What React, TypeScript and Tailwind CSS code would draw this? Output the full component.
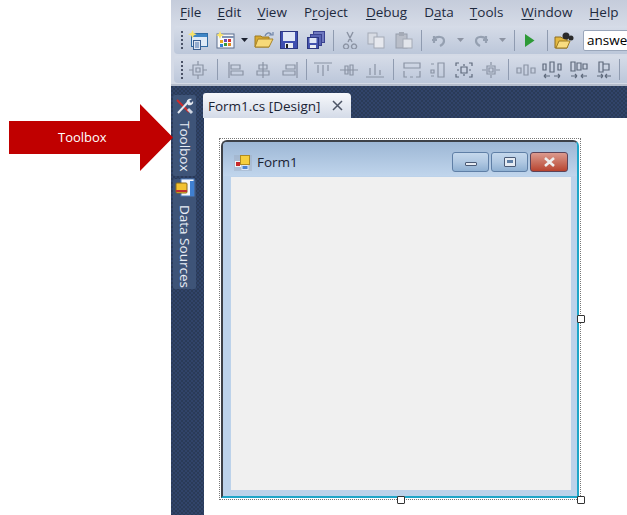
import React from "react";

const Grip = () => (
  <div className="flex flex-col gap-[2px] w-[3px] ml-[7px]">
    {[0, 1, 2, 3, 4].map((i) => (
      <div key={i} className="w-[2px] h-[2px] bg-[#4a5266]" />
    ))}
  </div>
);

const Sep = () => <div className="w-px h-[21px] bg-[#8f9bb0] shrink-0" />;

const Drop = ({ dark }: { dark?: boolean }) => (
  <svg width="7" height="4" viewBox="0 0 7 4" className="shrink-0"><path d="M0 0h7L3.5 4z" fill={dark ? "#1c2230" : "#8d94a3"} /></svg>
);

const Slot = ({ w, children }: { w: number; children: React.ReactNode }) => (
  <div className="flex items-center justify-center shrink-0" style={{ width: w }}>{children}</div>
);

const Mono = ({ d, w = 20 }: { d: string; w?: number }) => (
  <svg width={w} height="18" viewBox="0 0 20 18" fill="none" stroke="#8b93a3" strokeWidth="1.4"><path d={d} /></svg>
);

const NewProject = () => (
  <svg width="20" height="20" viewBox="0 0 20 20">
    <rect x="3.500" y="3.500" width="16" height="13" fill="#dfeaf6" stroke="#2f6aa3" />
    <rect x="4" y="4" width="15" height="3" fill="#3f86c6" />
    <rect x="5.500" y="10.500" width="7" height="9" fill="#dfe6f2" stroke="#3a5f92" />
    <path d="M7 13h4M7 15h4M7 17h4" stroke="#4a75ad" />
    <path d="M4.500 0l1.200 3 3 1.200-3 1.300-1.200 3-1.300-3L0 4.200l3.200-1.200z" fill="#f9e36a" />
  </svg>
);
const AddItem = () => (
  <svg width="19" height="18" viewBox="0 0 19 18">
    <rect x="1" y="3" width="17" height="14" fill="#f7f8fb" stroke="#5d6f8e" />
    <rect x="6" y="5" width="12" height="2" fill="#7f93b3" />
    <rect x="4" y="9" width="3" height="3" fill="#e8a820" />
    <rect x="8" y="8" width="3" height="3" fill="#6a4bb8" />
    <rect x="12" y="8" width="3" height="3" fill="#d8322a" />
    <rect x="4" y="13" width="3" height="3" fill="#2f7fd0" />
    <rect x="8" y="12" width="3" height="3" fill="#3a9a3a" />
    <rect x="12" y="12" width="3" height="3" fill="#e0861c" />
    <path d="M4 0l1.200 2.800L8 4 5.200 5.200 4 8 2.800 5.200 0 4l2.800-1.200z" fill="#f9e36a" />
  </svg>
);
const Open = () => (
  <svg width="20" height="18" viewBox="0 0 20 18">
    <path d="M1 5h6l1 1h7v10H1z" fill="#d8a92e" stroke="#9c7a22" />
    <path d="M4 8h15l-4 8H1z" fill="#f7d978" stroke="#a8842a" />
    <path d="M11 5c1-3 4-4 6-2l-1 1h3v-3" fill="none" stroke="#6f85a8" strokeWidth="1.200" />
  </svg>
);
const Save = () => (
  <svg width="18" height="18" viewBox="0 0 18 18">
    <rect x="0.500" y="0.500" width="17" height="17" fill="#3f4fb0" stroke="#2c3680" />
    <rect x="3" y="1" width="12" height="9" fill="#dfe6f6" />
    <rect x="5" y="12" width="8" height="5" fill="#e9ecf3" />
    <rect x="6" y="13" width="2" height="4" fill="#222" />
  </svg>
);
const SaveAll = () => (
  <svg width="18" height="18" viewBox="0 0 18 18">
    <rect x="6.500" y="0.500" width="11" height="11" fill="#6f79c0" stroke="#3a4290" />
    <rect x="3.500" y="3.500" width="11" height="11" fill="#5864b4" stroke="#3a4290" />
    <rect x="0.500" y="6.500" width="11" height="11" fill="#4453ae" stroke="#2c3680" />
    <rect x="2.500" y="7" width="7" height="5" fill="#dfe6f6" />
    <rect x="3" y="14" width="6" height="3" fill="#e9ecf3" />
  </svg>
);
const Cut = () => <Mono d="M7 1l5 10M13 1L8 11M6 13a2.500 2.500 0 1 0 .1 0M14 13a2.500 2.500 0 1 0 .1 0" />;
const Copy = () => (
  <svg width="18" height="17" viewBox="0 0 18 17">
    <rect x="1" y="1" width="9" height="11" fill="#d8dce4" stroke="#a4aab6" />
    <rect x="7" y="5" width="10" height="11" fill="#e6e8ee" stroke="#a4aab6" />
  </svg>
);
const Paste = () => (
  <svg width="18" height="18" viewBox="0 0 18 18">
    <rect x="1" y="3" width="11" height="14" fill="#b9bec9" stroke="#969dab" />
    <rect x="4" y="1" width="5" height="4" fill="#a4aab6" />
    <rect x="8" y="8" width="9" height="9" fill="#e2e5eb" stroke="#a4aab6" />
  </svg>
);
const Undo = () => <svg width="16" height="15" viewBox="0 0 16 15" fill="none"><path d="M3 10V3M1 7h5M3 6c3-3 10-3 10 2 0 2-2 4-4 5" stroke="#95a0b1" strokeWidth="2.200" /></svg>;
const Redo = () => <svg width="16" height="15" viewBox="0 0 16 15" fill="none"><path d="M13 10V3M15 7h-5M13 6C10 3 3 3 3 8c0 2 2 4 4 5" stroke="#95a0b1" strokeWidth="2.200" /></svg>;
const Play = () => <svg width="10" height="13" viewBox="0 0 10 13"><path d="M0 0l9.500 6.500L0 13z" fill="#2d9a37" /></svg>;
const Find = () => (
  <svg width="20" height="19" viewBox="0 0 20 19">
    <path d="M1 6h6l1 1h5v10H1z" fill="#e4b83f" stroke="#8c6d20" />
    <path d="M2 17l3-7h11l-3 7z" fill="#f8dc80" stroke="#9c7a22" />
    <circle cx="12" cy="5" r="3.500" fill="#2b2b2b" />
    <circle cx="17" cy="7" r="2.500" fill="#2b2b2b" />
  </svg>
);

const Layout = ({ n }: { n: number }) => {
  const paths: Record<number, string> = {
    0: "M5 4h10v10H5zM8 7h4v4H8zM10 0v4M10 14v4M1 9h4M15 9h4",
    1: "M3 1v16M5 4h9v4H5zM5 10h12v4H5z",
    2: "M10 1v16M6 4h8v4H6zM4 10h12v4H4z",
    3: "M17 1v16M6 4h9v4H6zM3 10h12v4H3z",
    4: "M1 2h18M5 4v8M10 4v11M15 4v6",
    5: "M1 9h18M6 5h3v8H6zM11 4h3v10h-3z",
    6: "M1 16h18M5 7v7M10 3v11M15 9v5",
    7: "M2 2h16v5H2zM2 10v6h3M8 16h3M14 16h4v-6",
    8: "M3 3h3M3 9h3v3H3zM3 15h3M10 2h6v14h-6z",
    9: "M2 5V2h3M15 2h3v3M18 13v3h-3M5 16H2v-3M7 6h6v6H7zM10 3v2M10 13v2M3 9h2M15 9h2",
    10: "M6 5h8v8H6zM8 7h4v4H8zM10 1v3M10 14v3M1 9h4M15 9h4",
    11: "M1 7h4v5H1zM8 4h4v10H8zM15 7h4v5h-4z",
    12: "M1 3h3v6H1zM8 1h4v10H8zM16 3h3v6h-3zM2 15h6M2 15l2-2M2 15l2 2M18 15h-6M18 15l-2-2M18 15l-2 2",
    13: "M2 1h4v9H2zM8 2h4v7H8zM14 3h4v5h-4zM2 15h6M8 15l-2-2M8 15l-2 2M18 15h-6M12 15l2-2M12 15l2 2",
    14: "M5 1h4v10H5zM9 3h6v6H9zM3 15h6M9 15l-2-2M9 15l-2 2M17 15h-6M11 15l2-2M11 15l2 2",
  };
  const strong = n >= 12 || n === 9;
  return (
    <svg width="20" height="18" viewBox="0 0 20 18" fill="none" stroke={strong ? "#5f6a7c" : "#8a93a4"} strokeWidth="1.200">
      <path d={paths[n]} />
    </svg>
  );
};

const M = ({ a, u, b, cls }: { a?: string; u: string; b?: string; cls: string }) => (
  <span className={cls}>
    {a}
    <span className="underline underline-offset-2 decoration-1">{u}</span>
    {b}
  </span>
);

const Caption = ({ k }: { k: "min" | "max" | "close" }) => {
  if (k === "close")
    return (
      <div className="w-[38px] h-[20px] rounded-[3px] border border-[#5c4358] bg-gradient-to-b from-[#dc9a8e] via-[#c9705f] to-[#b8432f] flex items-center justify-center">
        <svg width="13" height="10" viewBox="0 0 13 10"><path d="M2 1l9 8M11 1l-9 8" stroke="#eeeeee" strokeWidth="2.600" /></svg>
      </div>
    );
  return (
    <div className="w-[37px] h-[20px] rounded-[3px] border border-[#5f7fa6] bg-gradient-to-b from-[#c5d8ec] via-[#b0c8e2] to-[#8fb0d2] flex items-center justify-center">
      {k === "min" ? (
        <div className="w-[12px] h-[4px] mt-[5px] bg-[#e6ebf2] border border-[#4a5a75] rounded-[1px]" />
      ) : (
        <div className="w-[12px] h-[10px] bg-[#e6ebf2] border border-[#4a5a75] rounded-[1px] flex items-center justify-center">
          <div className="w-[6px] h-[3px] bg-[#5f7fa6]" />
        </div>
      )}
    </div>
  );
};

const Handle = ({ cls }: { cls: string }) => (
  <div className={`absolute w-[8px] h-[8px] bg-white border border-[#333] rounded-[1px] ${cls}`} />
);

export default function App() {
  return (
    <div className="relative w-[627px] h-[515px] bg-white overflow-hidden flex" style={{ fontFamily: '"Open Sans", sans-serif' }}>
      {/* Callout */}
      <div className="absolute left-[9px] top-[104px] w-[164px] h-[67px] z-10">
        <svg width="164" height="67" viewBox="0 0 164 67" className="absolute left-0 top-0">
          <path d="M0 17h131V0l33 33.500L131 67V50H0z" fill="#c00000" />
        </svg>
        <span className="absolute left-[49px] top-[24px] text-[13px] leading-[18px] text-white">Toolbox</span>
      </div>

      <div className="w-[171px] shrink-0" />

      <div className="flex-1 min-w-0 flex flex-col bg-[#2c3e5c] bg-[repeating-conic-gradient(#2a3b58_0_25%,#31446a_0_50%)] bg-[length:4px_4px]">
        {/* Menu */}
        <div className="h-[25px] flex items-center bg-gradient-to-b from-[#c5ccdb] to-[#d4dae6] text-[13.500px] text-[#1e2a3e] relative">
          <M u="F" b="ile" cls="ml-[9px]" />
          <M u="E" b="dit" cls="ml-[16px]" />
          <M u="V" b="iew" cls="ml-[16px]" />
          <M a="P" u="r" b="oject" cls="ml-[17px]" />
          <M u="D" b="ebug" cls="ml-[18px]" />
          <M a="D" u="a" b="ta" cls="ml-[17px]" />
          <M u="T" b="ools" cls="ml-[16px]" />
          <M u="W" b="indow" cls="ml-[18px]" />
          <M u="H" b="elp" cls="ml-[17px]" />
        </div>

        {/* Toolbar 1 */}
        <div className="h-[30px] flex items-center bg-[#d4dae6]">
          <div className="h-[28px] w-full flex items-center rounded-l-[4px] bg-gradient-to-b from-[#d6dce8] to-[#bcc7da] ml-[3px] -mr-[1px]">
            <Grip />
            <Slot w={28}><NewProject /></Slot>
            <Slot w={26}><AddItem /></Slot>
            <Slot w={13}><Drop dark /></Slot>
            <Slot w={25}><Open /></Slot>
            <Slot w={26}><Save /></Slot>
            <Slot w={27}><SaveAll /></Slot>
            <Slot w={8}><Sep /></Slot>
            <Slot w={25}><Cut /></Slot>
            <Slot w={28}><Copy /></Slot>
            <Slot w={27}><Paste /></Slot>
            <Slot w={9}><Sep /></Slot>
            <Slot w={25}><Undo /></Slot>
            <Slot w={18}><Drop /></Slot>
            <Slot w={23}><Redo /></Slot>
            <Slot w={20}><Drop /></Slot>
            <Slot w={5}><Sep /></Slot>
            <Slot w={26}><Play /></Slot>
            <Slot w={8}><Sep /></Slot>
            <Slot w={26}><Find /></Slot>
            <div className="ml-[6px] h-[21px] flex-1 min-w-0 bg-white border border-[#9aa6ba] rounded-[2px] pl-[3px] text-[13.500px] leading-[19px] text-black overflow-hidden whitespace-nowrap">answer</div>
          </div>
        </div>

        {/* Toolbar 2 */}
        <div className="h-[31px] flex items-center bg-[#d4dae6] border-b-[2px] border-[#b4bccb]">
          <div className="h-[27px] w-full flex items-center rounded-l-[4px] bg-gradient-to-b from-[#d6dce8] to-[#bcc7da] ml-[3px]">
            <Grip />
            <Slot w={28}><Layout n={0} /></Slot>
            <Slot w={10}><Sep /></Slot>
            <Slot w={27}><Layout n={1} /></Slot>
            <Slot w={27}><Layout n={2} /></Slot>
            <Slot w={27}><Layout n={3} /></Slot>
            <Slot w={6}><Sep /></Slot>
            <Slot w={27}><Layout n={4} /></Slot>
            <Slot w={26}><Layout n={5} /></Slot>
            <Slot w={26}><Layout n={6} /></Slot>
            <Slot w={10}><Sep /></Slot>
            <Slot w={27}><Layout n={7} /></Slot>
            <Slot w={25}><Layout n={8} /></Slot>
            <Slot w={27}><Layout n={9} /></Slot>
            <Slot w={27}><Layout n={10} /></Slot>
            <Slot w={9}><Sep /></Slot>
            <Slot w={25}><Layout n={11} /></Slot>
            <Slot w={27}><Layout n={12} /></Slot>
            <Slot w={27}><Layout n={13} /></Slot>
            <Slot w={23}><Layout n={14} /></Slot>
            <Slot w={9}><Sep /></Slot>
          </div>
        </div>

        {/* Body */}
        <div className="flex-1 flex min-h-0">
          {/* Rail */}
          <div className="w-[33px] shrink-0 pl-[2px] pt-[9px] flex flex-col gap-[3px]">
            <div className="w-[23px] h-[81px] bg-[#3e5478] rounded-[2px] flex flex-col items-center text-[#e8edf5]">
              <svg width="18" height="18" viewBox="0 0 18 18" className="mt-[2px] shrink-0" fill="none">
                <path d="M1 3l12 12" stroke="#d02a2a" strokeWidth="2" />
                <path d="M2 16L13 4" stroke="#e4e8ef" strokeWidth="2" />
                <path d="M11 6c-1-3 2-5 5-4l-3 2 2 2 2-2c1 3-2 5-5 4z" fill="#e4e8ef" />
                <path d="M12 12l4 4" stroke="#cfd6e2" strokeWidth="3" />
              </svg>
              <span className="mt-[6px] text-[13.500px] leading-[22px] whitespace-nowrap [writing-mode:vertical-rl]">Toolbox</span>
            </div>
            <div className="w-[23px] h-[110px] bg-[#3e5478] rounded-[2px] flex flex-col items-center text-[#e8edf5]">
              <svg width="20" height="19" viewBox="0 0 20 19" className="-mt-[1px] shrink-0">
                <rect x="6" y="1" width="13" height="17" fill="#f4f7fb" stroke="#4e7fc0" />
                <rect x="15" y="3" width="4" height="15" fill="#3f7fd0" />
                <rect x="1" y="5" width="11" height="10" rx="1" fill="#f2c230" stroke="#8a6a18" />
                <rect x="1" y="12" width="11" height="2" fill="#c03030" />
              </svg>
              <span className="mt-[8px] text-[13.500px] leading-[22px] whitespace-nowrap [writing-mode:vertical-rl]">Data Sources</span>
            </div>
          </div>

          {/* Document */}
          <div className="flex-1 min-w-0 flex flex-col">
            <div className="h-[32px] flex items-end shrink-0">
              <div className="w-[148px] h-[25px] rounded-tr-[4px] rounded-tl-[3px] -ml-[1px] bg-gradient-to-b from-[#f7f8fb] to-[#d4dbe8] flex items-center pl-[5px] gap-[12px]">
                <span className="text-[13.500px] leading-[18px] text-[#1a2333] whitespace-nowrap">Form1.cs [Design]</span>
                <svg width="11" height="11" viewBox="0 0 11 11"><path d="M1 1l9 9M10 1l-9 9" stroke="#4d5566" strokeWidth="1.500" /></svg>
              </div>
            </div>
            <div className="flex-1 bg-white pl-[15px] pt-[20px] relative">
              {/* selection */}
              <div className="relative w-[362px] h-[362px] border border-dotted border-[#777] p-[1px]">
                <div className="w-full h-full rounded-t-[6px] border-2 border-[#3d4148] border-b-[#1ea5c8] border-r-[#1ea5c8] bg-[#bcd2ea] flex flex-col overflow-hidden">
                  <div className="h-[34px] shrink-0 flex items-center pt-[7px] bg-gradient-to-b from-[#9db7d5] to-[#c0d5ec]">
                    <svg width="18" height="16" viewBox="0 0 18 16" className="ml-[11px] shrink-0">
                      <rect x="0" y="0" width="18" height="16" fill="#9aa8bc" opacity="0.400" />
                      <rect x="1.500" y="6.500" width="5" height="5" fill="#c82828" stroke="#f2f2f2" />
                      <rect x="6.500" y="0.500" width="9" height="9" fill="#f6cf3e" stroke="#b08a20" />
                      <rect x="8" y="10.500" width="6" height="4" fill="#4d82d0" stroke="#dce8f8" />
                    </svg>
                    <span className="ml-[5px] text-[13.500px] text-[#1a2333]">Form1</span>
                    <div className="ml-auto mr-[9px] mt-[-2px] flex gap-[2px]">
                      <Caption k="min" />
                      <Caption k="max" />
                      <Caption k="close" />
                    </div>
                  </div>
                  <div className="flex-1 bg-[#f0f0f0] ml-[8px] mr-[6px] mb-[6px] mt-[1px]" />
                </div>
                <Handle cls="right-[-5px] top-[176px]" />
                <Handle cls="left-[177px] bottom-[-5px]" />
                <Handle cls="right-[-5px] bottom-[-5px]" />
              </div>
            </div>
          </div>
        </div>
      </div>
    </div>
  );
}
